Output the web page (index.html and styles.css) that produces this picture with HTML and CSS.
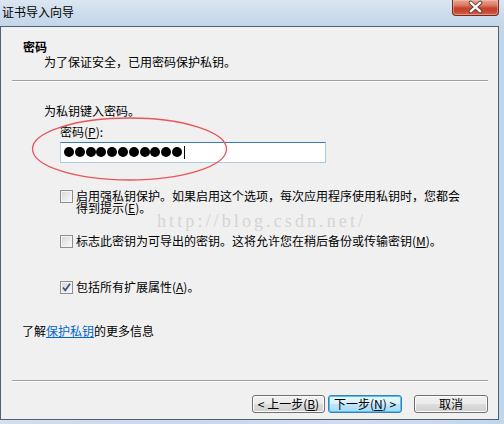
FILE: index.html
```html
<!DOCTYPE html>
<html lang="zh-CN">
<head>
<meta charset="utf-8">
<title>证书导入向导</title>
<link rel="stylesheet" href="styles.css">
</head>
<body>
<div class="window">
  <div class="titlebar">
    <span class="title">证书导入向导</span>
    <div class="close">
      <svg width="47" height="16" viewBox="0 0 47 16">
        <path d="M18.5 3.5 L28.5 12.5 M28.5 3.5 L18.5 12.5" stroke="#5a3a36" stroke-width="4.2" stroke-linecap="round" fill="none"/>
        <path d="M18.5 3.5 L28.5 12.5 M28.5 3.5 L18.5 12.5" stroke="#ffffff" stroke-width="2.4" stroke-linecap="round" fill="none"/>
      </svg>
    </div>
  </div>
  <div class="client">
    <div class="hdr">
      <div class="hdr-title">密码</div>
      <div class="hdr-sub">为了保证安全，已用密码保护私钥。</div>
    </div>
    <div class="sep"></div>
    <div class="body">
      <div class="prompt">为私钥键入密码。</div>
      <div class="pw-label">密码(<u>P</u>):</div>
      <div class="pw-input">
        <span class="dot"></span><span class="dot"></span><span class="dot"></span><span class="dot"></span><span class="dot"></span><span class="dot"></span><span class="dot"></span><span class="dot"></span><span class="dot"></span><span class="dot"></span><span class="dot"></span><span class="caret"></span>
      </div>
      <div class="opt opt1">
        <span class="cb"></span>
        <span class="opt-text">启用强私钥保护。如果启用这个选项，每次应用程序使用私钥时，您都会<br>得到提示(<u>E</u>)。</span>
      </div>
      <div class="opt opt2">
        <span class="cb"></span>
        <span class="opt-text">标志此密钥为可导出的密钥。这将允许您在稍后备份或传输密钥(<u>M</u>)。</span>
      </div>
      <div class="opt opt3">
        <span class="cb checked">
          <svg width="11" height="11" viewBox="0 0 11 11"><path d="M2 5.5 L4.3 8.3 L9 1.8" stroke="#3b4f80" stroke-width="1.7" fill="none"/></svg>
        </span>
        <span class="opt-text">包括所有扩展属性(<u>A</u>)。</span>
      </div>
    </div>
    <div class="more">了解<a class="link" href="#">保护私钥</a>的更多信息</div>
    <div class="sep sep-bottom"></div>
    <div class="footer">
      <button class="btn btn-back">&lt; 上一步(<u>B</u>)</button>
      <button class="btn btn-next">下一步(<u>N</u>) &gt;</button>
      <button class="btn btn-cancel">取消</button>
    </div>
  </div>
  <div class="watermark">http://blog.csdn.net/</div>
  <svg class="annot" width="504" height="424" viewBox="0 0 504 424">
    <ellipse cx="129.5" cy="149" rx="97" ry="31" fill="none" stroke="#e8565a" stroke-width="1.3"/>
  </svg>
</div>
</body>
</html>
```

FILE: styles.css
```css
* { box-sizing: border-box; }
html, body {
  margin: 0;
  padding: 0;
}
body {
  width: 504px;
  height: 424px;
  overflow: hidden;
  font-family: "Noto Sans CJK SC", "Liberation Sans", sans-serif;
  font-size: 12px;
  line-height: 12px;
  color: #000;
}
.window {
  position: relative;
  width: 504px;
  height: 424px;
  display: flex;
  flex-direction: column;
  background: linear-gradient(90deg, #d3e0ed 0%, #c6d8ea 40%, #cfdeee 70%, #c2d6ea 100%);
}
.titlebar {
  height: 26px;
  display: flex;
  justify-content: space-between;
  align-items: flex-start;
  background: linear-gradient(180deg, #dbe6f1 0%, #cbdbeb 60%, #c4d6e8 100%);
}
.title {
  padding: 6px 0 0 2px;
  line-height: 12px;
}
.close {
  width: 47px;
  height: 16px;
  margin-right: 5px;
  border: 1px solid #6e2c24;
  border-top: none;
  border-radius: 0 0 4px 4px;
  background: linear-gradient(180deg, #e9a899 0%, #dc7a64 35%, #c6412b 55%, #c84a33 80%, #d86a50 100%);
  box-shadow: inset 0 0 0 1px rgba(255, 200, 190, 0.45);
  display: flex;
}
.close svg { display: block; margin-top: -1px; }
.client {
  width: 499px;
  height: 394px;
  border: 1px solid #4f5f74;
  background: #f0f0f0;
  display: flex;
  flex-direction: column;
}
.hdr {
  padding: 14px 0 0 22px;
}
.hdr-title {
  font-weight: bold;
}
.hdr-sub {
  margin-top: 3px;
  padding-left: 21px;
}
.sep {
  margin: 12px 10px 0 11px;
  height: 2px;
  border-top: 1px solid #a0a0a0;
  border-bottom: 1px solid #ffffff;
}
.body {
  padding-left: 43px;
}
.prompt {
  margin-top: 23px;
}
.pw-label {
  margin-top: 9px;
  padding-left: 16px;
}
.pw-input {
  margin: 4px 0 0 16px;
  width: 266px;
  height: 21px;
  background: #fff;
  border: 1px solid #a9cbe4;
  border-top-color: #3d7bad;
  border-left-color: #b5cfe7;
  display: flex;
  align-items: center;
  gap: 0.8px;
  padding-left: 3px;
}
.dot {
  width: 10px;
  height: 10px;
  border-radius: 50%;
  background: #000;
  margin-top: -1px;
}
.caret {
  width: 1px;
  height: 13px;
  background: #000;
  margin-left: 1px;
  margin-top: -1px;
}
.opt {
  display: flex;
  align-items: flex-start;
  margin-left: 16px;
}
.opt1 { margin-top: 27px; }
.opt2 { margin-top: 21px; }
.opt3 { margin-top: 33px; }
.cb {
  flex: none;
  width: 13px;
  height: 13px;
  margin-right: 3px;
  border: 1px solid #8e8f8f;
  background: linear-gradient(135deg, #d6d6d6 0%, #ececec 60%, #fbfbfb 100%);
  box-shadow: inset 0 0 0 1px #f4f4f4;
  display: flex;
  align-items: center;
  justify-content: center;
}
.cb.checked svg { display: block; }
.opt-text {
  line-height: 12px;
}
.more {
  margin-top: 31px;
  padding-left: 21px;
}
.link {
  color: #0066cc;
  text-decoration: underline;
}
.sep-bottom {
  margin-top: 43px;
}
.footer {
  margin-top: 13px;
  display: flex;
  justify-content: flex-end;
  padding-right: 10px;
}
.btn {
  font-family: inherit;
  font-size: 12px;
  line-height: 12px;
  height: 18px;
  padding: 0;
  color: #000;
  border: 1px solid #707070;
  border-radius: 3px;
  background: linear-gradient(180deg, #f2f2f2 0%, #ebebeb 48%, #dddddd 52%, #cfcfcf 100%);
  box-shadow: inset 0 0 0 1px #fcfcfc;
}
.btn-back { width: 73px; }
.btn-next {
  width: 74px;
  margin-left: 3px;
  border-color: #3c7fb1;
  background: linear-gradient(180deg, #eaf6fd 0%, #d9f0fc 48%, #bee6fd 52%, #a7d9f5 100%);
  box-shadow: inset 0 0 0 1px #48c5f2;
  text-align: left;
  padding-left: 5px;
}
.btn-cancel {
  width: 74px;
  margin-left: 12px;
}
.watermark {
  position: absolute;
  left: 157px;
  top: 216px;
  font-family: "Liberation Serif", serif;
  font-size: 18px;
  line-height: 10px;
  letter-spacing: 3.1px;
  color: #d5d5d5;
  pointer-events: none;
}
.annot {
  position: absolute;
  left: 0;
  top: 0;
  pointer-events: none;
}
```
